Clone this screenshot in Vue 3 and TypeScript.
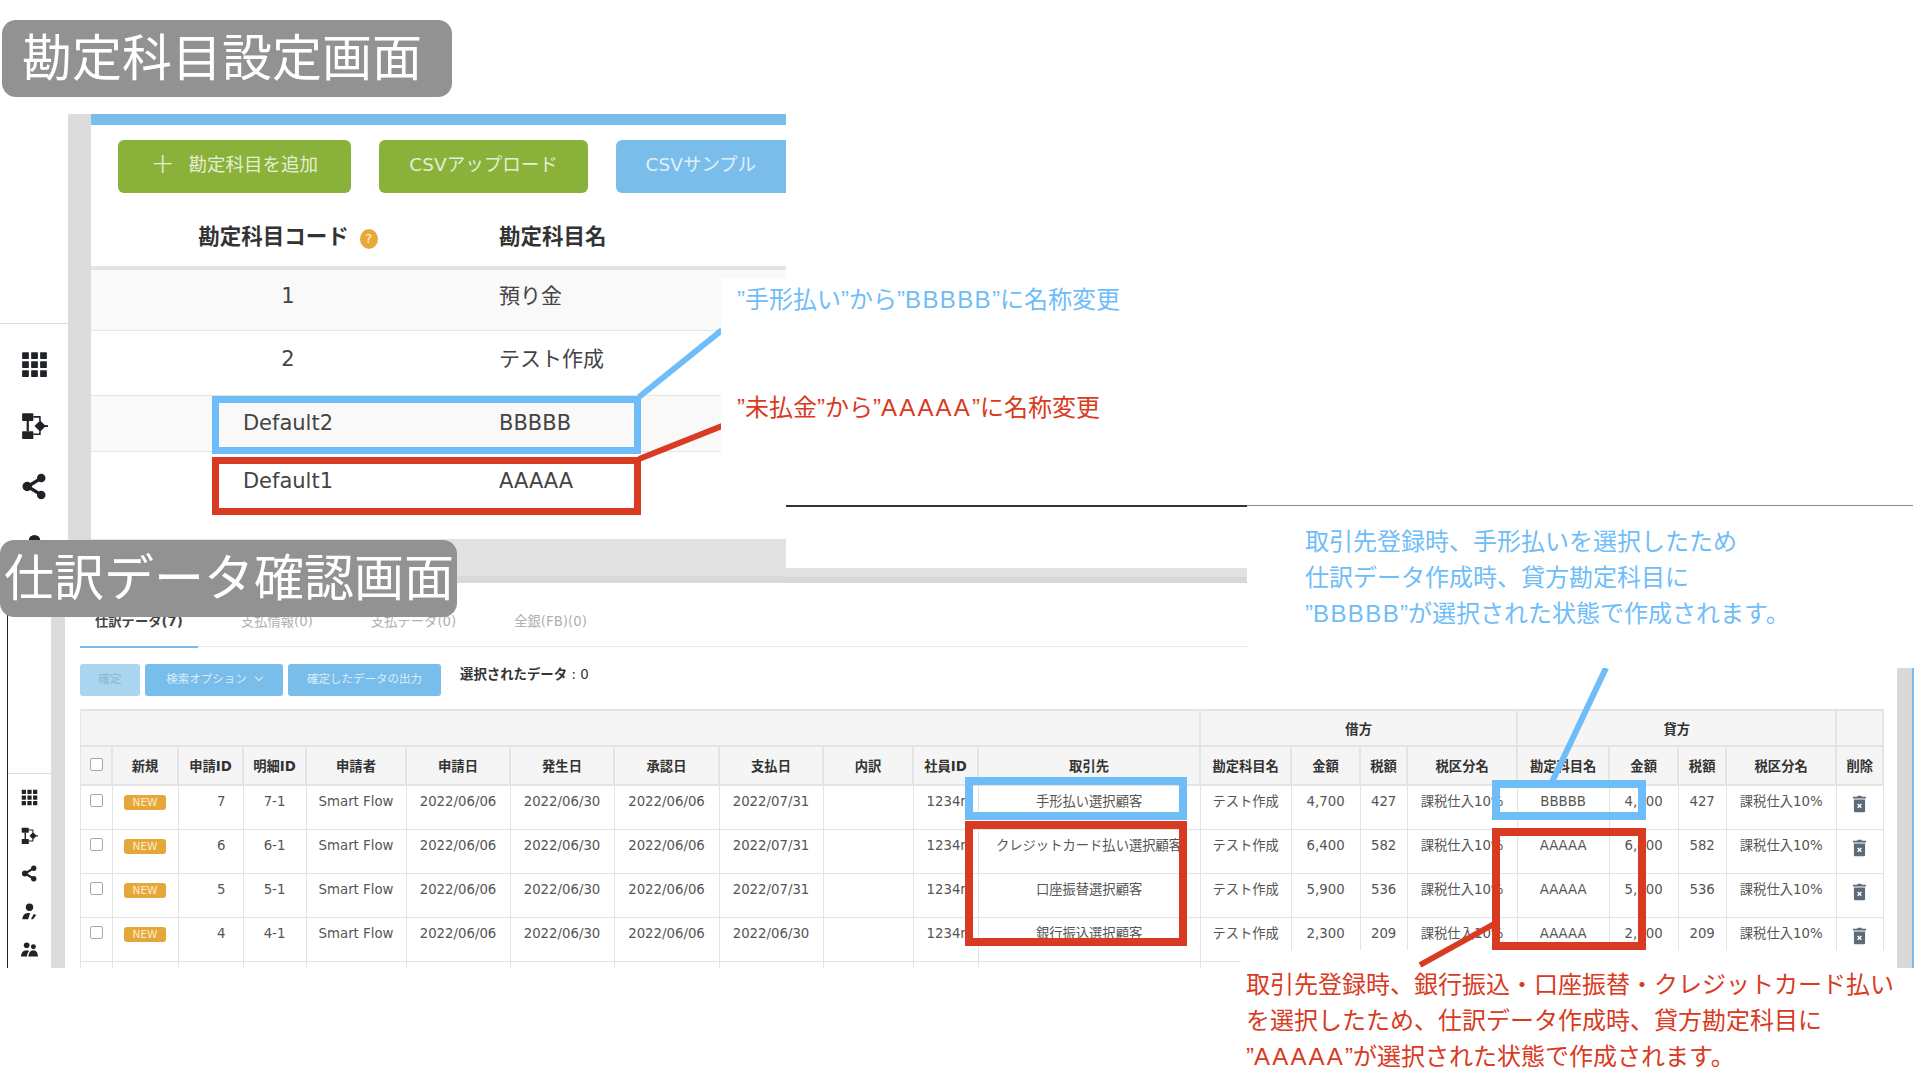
<template>
  <div class="slide">
    <!-- upper screenshot -->
    <section class="upper">
      <aside class="upper-side">
        <svg v-for="n in 4" :key="n" class="up-icon" viewBox="0 0 24 24">
          <use :href="'#ic-' + sideIcons[n - 1]" />
        </svg>
      </aside>
      <div class="upper-gutter"></div>
      <div class="upper-main">
        <div class="top-bar"></div>
        <div class="up-actions">
          <button class="up-btn green add" type="button"><span class="plus">+</span>勘定科目を追加</button>
          <button class="up-btn green csv" type="button">CSVアップロード</button>
          <button class="up-btn blue sample" type="button">CSVサンプル</button>
        </div>
        <div class="acc-head">
          <div class="acc-code">勘定科目コード<span class="help">?</span></div>
          <div class="acc-name">勘定科目名</div>
        </div>
        <div
          v-for="a in accounts"
          :key="a.code"
          class="acc-row"
          :class="{ odd: a.odd, last: a.code === 'Default1' }"
          :style="{ height: a.h + 'px', lineHeight: a.lh + 'px' }"
        >
          <div class="acc-code">{{ a.code }}</div>
          <div class="acc-name">{{ a.name }}</div>
        </div>
        <div class="up-foot"></div>
      </div>
    </section>

    <!-- lower screenshot -->
    <section class="lower">
      <aside class="lower-side">
        <svg v-for="i in sideIcons2" :key="i" class="lo-icon" viewBox="0 0 24 24">
          <use :href="'#ic-' + i" />
        </svg>
      </aside>
      <div class="lower-gutter"></div>
      <div class="lower-main">
        <div class="tabs">
          <span v-for="(t, i) in tabs" :key="t" class="tab" :class="{ on: i === 0 }">{{ t }}</span>
        </div>
        <div class="toolbar">
          <button class="lo-btn pale" type="button">確定</button>
          <button class="lo-btn opt" type="button">検索オプション<span class="chev"></span></button>
          <button class="lo-btn out" type="button">確定したデータの出力</button>
          <span class="selected"><b>選択されたデータ</b> : 0</span>
        </div>
        <div class="table-wrap">
          <table class="grid">
            <colgroup>
              <col v-for="(w, i) in colWidths" :key="i" :style="{ width: w + 'px' }" />
            </colgroup>
            <thead>
              <tr class="group">
                <th colspan="12"></th>
                <th colspan="4">借方</th>
                <th colspan="4">貸方</th>
                <th></th>
              </tr>
              <tr class="names">
                <th><span class="check"></span></th>
                <th v-for="h in headers" :key="h.k">{{ h.t }}</th>
              </tr>
            </thead>
            <tbody>
              <tr v-for="r in rows" :key="r.id">
                <td><span class="check"></span></td>
                <td><span class="new">NEW</span></td>
                <td class="num">{{ r.id }}</td>
                <td>{{ r.id }}-1</td>
                <td>Smart Flow</td>
                <td>2022/06/06</td>
                <td>2022/06/30</td>
                <td>2022/06/06</td>
                <td>{{ r.pay }}</td>
                <td></td>
                <td class="emp">1234n</td>
                <td>{{ r.client }}</td>
                <td>テスト作成</td>
                <td>{{ r.amount }}</td>
                <td>{{ r.tax }}</td>
                <td>課税仕入10%</td>
                <td>{{ r.credit }}</td>
                <td>{{ r.amount }}</td>
                <td>{{ r.tax }}</td>
                <td>課税仕入10%</td>
                <td>
                  <svg class="trash" viewBox="0 0 14 18">
                    <path d="M5 0h4l.6 1.2H14v2H0v-2h4.400zM1 4.200h12V16.500a1.500 1.500 0 0 1-1.500 1.500h-9A1.500 1.500 0 0 1 1 16.500z" fill="#5d6b78" />
                    <path d="M5 9l4 4M9 9l-4 4" stroke="#fff" stroke-width="1.500" />
                  </svg>
                </td>
              </tr>
              <tr class="empty">
                <td v-for="n in 21" :key="n"></td>
              </tr>
            </tbody>
          </table>
        </div>
        <div class="scroll"></div>
      </div>
    </section>

    <div class="band"></div>
    <div class="rule dark"></div>
    <div class="rule thin"></div>

    <!-- marks drawn over the screenshots -->
    <svg class="marks" viewBox="0 0 1920 1080">
      <g fill="none" stroke="#6fbdf8" stroke-width="7">
        <rect x="215.500" y="399.500" width="422" height="51" />
        <path d="M639 397L722 330" stroke-width="6" />
      </g>
      <g fill="none" stroke="#d93a22" stroke-width="7">
        <rect x="215.500" y="460.500" width="422" height="51" />
        <path d="M639 459L722 426" stroke-width="6" />
      </g>
      <g fill="none" stroke="#6fbdf8" stroke-width="8">
        <rect x="969" y="781" width="214" height="35" />
        <rect x="1496" y="784" width="146" height="32" />
        <path d="M1606 668L1552 782" stroke-width="6" />
      </g>
      <g fill="none" stroke="#d93a22" stroke-width="8">
        <rect x="969" y="825" width="214" height="117" />
        <rect x="1496" y="832" width="146" height="114" />
      </g>
    </svg>

    <div class="note-up">
      <p class="blue-t first">”手形払い”から”<span class="ls-b">BBBBB</span>”に名称変更</p>
      <p class="red-t second">”未払金”から”<span class="ls-a">AAAAA</span>”に名称変更</p>
    </div>
    <div class="note-blue blue-t">
      <p>取引先登録時、手形払いを選択したため</p>
      <p>仕訳データ作成時、貸方勘定科目に</p>
      <p>”<span class="ls-b">BBBBB</span>”が選択された状態で作成されます。</p>
    </div>
    <div class="note-red red-t">
      <p>取引先登録時、銀行振込・口座振替・クレジットカード払い</p>
      <p>を選択したため、仕訳データ作成時、貸方勘定科目に</p>
      <p>”<span class="ls-a">AAAAA</span>”が選択された状態で作成されます。</p>
    </div>

    <svg class="marks" viewBox="0 0 1920 1080">
      <path d="M1494 924L1420 965" fill="none" stroke="#d93a22" stroke-width="6" />
    </svg>

    <div class="label first-label">勘定科目設定画面</div>
    <div class="label second-label">仕訳データ確認画面</div>

    <svg class="defs" width="0" height="0">
      <defs>
        <g id="ic-grid" fill="#1f2328">
          <rect x="1" y="1" width="6" height="6" rx=".5" /><rect x="9" y="1" width="6" height="6" rx=".5" /><rect x="17" y="1" width="6" height="6" rx=".5" />
          <rect x="1" y="9" width="6" height="6" rx=".5" /><rect x="9" y="9" width="6" height="6" rx=".5" /><rect x="17" y="9" width="6" height="6" rx=".5" />
          <rect x="1" y="17" width="6" height="6" rx=".5" /><rect x="9" y="17" width="6" height="6" rx=".5" /><rect x="17" y="17" width="6" height="6" rx=".5" />
        </g>
        <g id="ic-flow" fill="#1f2328">
          <rect x="1" y="1" width="10" height="7" rx=".8" />
          <rect x="1" y="17" width="10" height="7" rx=".8" />
          <rect x="5" y="8" width="2" height="9" />
          <path d="M11 3.500h6.500V8h-1.400V5H11zM11 20.500h6.500V17h-1.400v2H11z" />
          <path d="M17 7.500l5 5-5 5-5-5z" />
          <rect x="20" y="11.700" width="4" height="1.600" />
        </g>
        <g id="ic-share" fill="#1f2328">
          <circle cx="18" cy="4.500" r="3.800" /><circle cx="5.500" cy="12" r="4.200" /><circle cx="18" cy="19.500" r="3.800" />
          <path d="M6 12L18 4.500M6 12l12 7.500" stroke="#1f2328" stroke-width="3" />
        </g>
        <g id="ic-user" fill="#1f2328">
          <circle cx="12" cy="6" r="5.200" />
          <path d="M2 23c0-5 3-9 8-9h3l-3 9zM14 23l4-7.500 3.500 1.500-4.500 6z" />
        </g>
        <g id="ic-users" fill="#1f2328">
          <circle cx="8" cy="6" r="4" /><circle cx="17.500" cy="8" r="3.500" />
          <path d="M0 22c0-5 3-9 8-9 1.500 0 2.500.3 3.500 1-2 2-3 5-3 8zM17.500 13c4 0 6.500 4 6.500 9H10.500c0-5 3-9 7-9z" />
        </g>
      </defs>
    </svg>
  </div>
</template>

<script setup lang="ts">
const sideIcons = ['grid', 'flow', 'share', 'user'];
const sideIcons2 = ['grid', 'flow', 'share', 'user', 'users'];

const accounts = [
  { code: '1', name: '預り金', h: 61, lh: 52, odd: true },
  { code: '2', name: 'テスト作成', h: 65, lh: 56, odd: false },
  { code: 'Default2', name: 'BBBBB', h: 56, lh: 54, odd: true },
  { code: 'Default1', name: 'AAAAA', h: 60, lh: 59, odd: false },
];

const tabs = ['仕訳データ(7)', '支払情報(0)', '支払データ(0)', '全銀(FB)(0)'];

const colWidths = [32, 66, 65, 63, 100, 104, 104, 105, 104, 90, 65, 222, 91, 69, 47, 110, 92, 69, 48, 110, 47];

const headers = [
  '新規', '申請ID', '明細ID', '申請者', '申請日', '発生日', '承認日', '支払日', '内訳', '社員ID', '取引先',
  '勘定科目名', '金額', '税額', '税区分名', '勘定科目名', '金額', '税額', '税区分名', '削除',
].map((t, k) => ({ t, k }));

const rows = [
  { id: 7, pay: '2022/07/31', client: '手形払い選択顧客', amount: '4,700', tax: 427, credit: 'BBBBB' },
  { id: 6, pay: '2022/07/31', client: 'クレジットカード払い選択顧客', amount: '6,400', tax: 582, credit: 'AAAAA' },
  { id: 5, pay: '2022/07/31', client: '口座振替選択顧客', amount: '5,900', tax: 536, credit: 'AAAAA' },
  { id: 4, pay: '2022/06/30', client: '銀行振込選択顧客', amount: '2,300', tax: 209, credit: 'AAAAA' },
];
</script>

<style>
html,
body {
  margin: 0;
  background: #fff;
}
</style>

<style scoped>
.slide {
  position: relative;
  width: 1920px;
  height: 1080px;
  overflow: hidden;
  background: #fff;
  font-family: "DejaVu Sans", "Noto Sans CJK JP", sans-serif;
  color: #555;
}

p {
  margin: 0;
}

button {
  border: 0;
  padding: 0;
  font-family: inherit;
  cursor: pointer;
}

.label {
  position: absolute;
  height: 77px;
  line-height: 69px;
  border-radius: 14px;
  background: #929292;
  color: #fff;
  font-family: "Noto Sans CJK JP", sans-serif;
  font-weight: 400;
  font-size: 50px;
  white-space: nowrap;
}

.first-label {
  left: 2px;
  top: 20px;
  width: 450px;
  padding-left: 20px;
  box-sizing: border-box;
}

.second-label {
  left: 0;
  top: 540px;
  width: 457px;
  padding-left: 4px;
  box-sizing: border-box;
}

/* upper screenshot */
.upper {
  position: absolute;
  left: 0;
  top: 114px;
  width: 786px;
  height: 469px;
  display: flex;
  overflow: hidden;
}

.upper-side {
  width: 68px;
  flex-shrink: 0;
  display: flex;
  flex-direction: column;
  align-items: center;
  gap: 34px;
  box-sizing: border-box;
  margin-top: 209px;
  padding-top: 27px;
  border-top: 1px solid #ddd;
}

.up-icon {
  width: 27px;
  height: 27px;
  flex-shrink: 0;
}

.upper-gutter {
  width: 23px;
  flex-shrink: 0;
  background: #dcdcdc;
}

.upper-main {
  flex: 1;
  min-width: 0;
  display: flex;
  flex-direction: column;
}

.top-bar {
  height: 11px;
  background: #79bdea;
}

.up-actions {
  display: flex;
  gap: 28px;
  padding: 15px 0 0 27px;
  height: 53px;
}

.up-btn {
  height: 53px;
  padding-bottom: 7px;
  box-sizing: border-box;
  border-radius: 6px;
  color: #e4eed3;
  font-size: 18.500px;
  flex-shrink: 0;
}

.up-btn.green {
  background: #8ab13a;
}

.up-btn.blue {
  background: #7bbdea;
  color: #dff0fb;
}

.add {
  width: 233px;
}

.plus {
  font-size: 28px;
  font-weight: 300;
  line-height: 20px;
  margin-right: 14px;
  vertical-align: -2px;
}

.csv {
  width: 209px;
}

.sample {
  width: 200px;
  padding-right: 30px;
  text-align: center;
}

.acc-head {
  display: flex;
  height: 73px;
  box-sizing: content-box;
  line-height: 88px;
  border-bottom: 4px solid #e3e3e3;
  color: #333;
  font-size: 21.500px;
  font-weight: 700;
}

.acc-row {
  display: flex;
  flex-shrink: 0;
  box-sizing: border-box;
  border-bottom: 1px solid #e5e5e5;
  font-size: 21px;
  color: #444;
}

.acc-row.odd {
  background: #f9f9f9;
}

.acc-row.last {
  border-bottom: 0;
}

.acc-code {
  width: 394px;
  text-align: center;
  flex-shrink: 0;
}

.acc-name {
  padding-left: 14px;
}

.help {
  display: inline-block;
  width: 18px;
  height: 20px;
  margin-left: 11px;
  border-radius: 50%;
  background: #e8a93c;
  color: #fff6e0;
  font-size: 13px;
  font-weight: 400;
  line-height: 20px;
  text-align: center;
  vertical-align: 1px;
}

.up-foot {
  flex: 1;
  margin-top: 27px;
  background: linear-gradient(#e2e2e2 0, #e2e2e2 37px, #d8d8d8 37px);
}

/* lower screenshot */
.lower {
  position: absolute;
  left: 7px;
  top: 583px;
  width: 1907px;
  height: 385px;
  display: flex;
  overflow: hidden;
  background: #fff;
}

.lower-side {
  width: 44px;
  flex-shrink: 0;
  box-sizing: border-box;
  border-left: 1.500px solid #222;
  display: flex;
  flex-direction: column;
  align-items: center;
  gap: 21px;
  margin-top: 0;
  padding-top: 206px;
  background: linear-gradient(#fff 190px, #ddd 190px, #ddd 191px, #fff 191px);
}

.lo-icon {
  width: 17px;
  height: 17px;
  flex-shrink: 0;
}

.lower-gutter {
  width: 14px;
  flex-shrink: 0;
  background: #dcdcdc;
}

.lower-main {
  position: relative;
  flex: 1;
  min-width: 0;
  padding-left: 15px;
}

.tabs {
  display: flex;
  gap: 28px;
  height: 64px;
  box-sizing: border-box;
  border-bottom: 1px solid #e8e8e8;
  padding-top: 29px;
}

.tab {
  padding: 0 15px;
  height: 34px;
  line-height: 20px;
  font-size: 13.300px;
  text-align: center;
  color: #b0b0b0;
  white-space: nowrap;
}

.tab.on {
  color: #444;
  font-weight: 700;
  box-shadow: 0 2px 0 #79bdea;
}

.toolbar {
  display: flex;
  gap: 5px;
  margin-top: 17px;
  height: 32px;
}

.lo-btn {
  height: 32px;
  padding-bottom: 4px;
  box-sizing: border-box;
  border-radius: 3px;
  background: #79bdea;
  color: #dcedf9;
  font-size: 11.500px;
}

.lo-btn.pale {
  width: 60px;
  background: #a9d5f1;
  color: #8fb5cf;
}

.lo-btn.opt {
  width: 138px;
}

.lo-btn.out {
  width: 153px;
}

.chev {
  display: inline-block;
  width: 5px;
  height: 5px;
  margin: 0 0 3px 9px;
  border-right: 1px solid #dcedf9;
  border-bottom: 1px solid #dcedf9;
  transform: rotate(45deg);
}

.selected {
  margin-left: 14px;
  font-size: 13.400px;
  line-height: 22px;
  color: #333;
}

.table-wrap {
  margin-top: 13px;
  height: 259px;
  overflow: hidden;
}

.grid {
  width: 1803px;
  margin-left: -1px;
  table-layout: fixed;
  border-collapse: collapse;
  font-size: 13.300px;
}

.grid th {
  background: #f5f5f5;
  border: 2px solid #e4e4e4;
  color: #333;
  font-weight: 700;
  font-size: 13.300px;
  padding: 0;
  white-space: nowrap;
}

.group th {
  height: 34px;
}

.names th {
  height: 37px;
}

.grid td {
  height: 44px;
  box-sizing: border-box;
  border: 1px solid #e4e4e4;
  padding: 6px 0 0;
  line-height: 20px;
  vertical-align: top;
  text-align: center;
  white-space: nowrap;
  overflow: hidden;
  color: #555;
}

.grid td.num {
  text-align: right;
  padding-right: 17px;
}

.grid td.emp {
  text-align: left;
  padding-left: 13px;
}

.empty td {
  height: 20px;
}

.check {
  display: inline-block;
  width: 11px;
  height: 11px;
  border: 1px solid #a8a8a8;
  border-radius: 2px;
  background: #fff;
  vertical-align: -1px;
}

.new {
  display: inline-block;
  width: 42px;
  height: 15px;
  border-radius: 3px;
  background: #e5a73a;
  color: #fdeecb;
  font-size: 10.500px;
  line-height: 15px;
}

.trash {
  display: inline-block;
  width: 13px;
  height: 18px;
  margin-top: 3px;
}

.scroll {
  position: absolute;
  right: 0;
  top: 85px;
  width: 17px;
  height: 300px;
  background: #d9d9d9;
  border-right: 2px solid #79bdea;
  box-sizing: border-box;
}

.band {
  position: absolute;
  left: 786px;
  top: 568px;
  width: 461px;
  height: 15px;
  background: linear-gradient(#e2e2e2 9px, #d8d8d8 9px);
}

.rule {
  position: absolute;
  top: 505px;
}

.rule.dark {
  left: 786px;
  width: 461px;
  height: 2px;
  background: #333;
}

.rule.thin {
  left: 1247px;
  width: 666px;
  height: 1px;
  background: #8a8a8a;
}

.marks {
  position: absolute;
  left: 0;
  top: 0;
  width: 1920px;
  height: 1080px;
}

.defs {
  position: absolute;
}

/* annotations */
.blue-t {
  color: #6fbdf8;
}

.red-t {
  color: #d93a22;
}

.ls-b {
  letter-spacing: 1.400px;
}

.ls-a {
  letter-spacing: 2.200px;
}

.note-up,
.note-blue,
.note-red {
  position: absolute;
  box-sizing: border-box;
  background: #fff;
  font-family: "Liberation Sans", "Noto Sans CJK JP", sans-serif;
  font-size: 24px;
  line-height: 36px;
  white-space: nowrap;
}

.note-up {
  left: 721px;
  top: 278px;
  width: 526px;
  height: 220px;
  padding: 4px 0 0 16px;
}

.note-up .second {
  margin-top: 72px;
}

.note-blue {
  left: 1247px;
  top: 507px;
  width: 673px;
  height: 161px;
  padding: 17px 0 0 58px;
}

.note-red {
  left: 1241px;
  top: 950px;
  width: 648px;
  height: 130px;
  padding: 17px 0 0 5px;
}
</style>
